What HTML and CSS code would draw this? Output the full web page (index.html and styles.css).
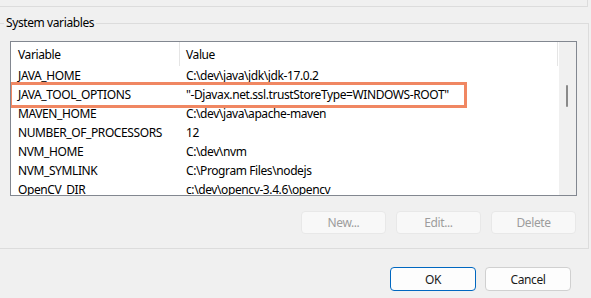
FILE: index.html
```html
<!DOCTYPE html>
<html lang="en">

<head>
  <meta charset="UTF-8" />
  <title>Environment Variables</title>
  <link rel="stylesheet" href="styles.css">
</head>

<body>

  <div class="prev-group"></div>

  <fieldset class="group">
    <legend>System variables</legend>

    <div class="listbox">
      <div class="list-main">
        <div class="row header">
          <span class="col-name">Variable</span>
          <span class="col-value">Value</span>
        </div>
        <div class="row"><span class="col-name">JAVA_HOME</span><span class="col-value">C:\dev\java\jdk\jdk-17.0.2</span></div>
        <div class="row"><span class="col-name">JAVA_TOOL_OPTIONS</span><span class="col-value">"-Djavax.net.ssl.trustStoreType=WINDOWS-ROOT"</span></div>
        <div class="row"><span class="col-name">MAVEN_HOME</span><span class="col-value">C:\dev\java\apache-maven</span></div>
        <div class="row"><span class="col-name">NUMBER_OF_PROCESSORS</span><span class="col-value">12</span></div>
        <div class="row"><span class="col-name">NVM_HOME</span><span class="col-value">C:\dev\nvm</span></div>
        <div class="row"><span class="col-name">NVM_SYMLINK</span><span class="col-value">C:\Program Files\nodejs</span></div>
        <div class="row"><span class="col-name">OpenCV_DIR</span><span class="col-value">c:\dev\opencv-3.4.6\opencv</span></div>
      </div>
      <div class="scrollbar"><div class="thumb"></div></div>
      <div class="highlight"></div>
    </div>

    <div class="buttons">
      <button class="btn" disabled>New...</button>
      <button class="btn" disabled>Edit...</button>
      <button class="btn" disabled>Delete</button>
    </div>
  </fieldset>

  <div class="dialog-buttons">
    <button class="btn primary">OK</button>
    <button class="btn">Cancel</button>
  </div>

</body>

</html>
```

FILE: styles.css
```css
body {
  font-family: 'Noto Sans', 'Open Sans', sans-serif;
  font-size: 12px;
  letter-spacing: -0.4px;
  background: #f0f0f0;
  color: #000;
  margin: 0;
  padding: 0;
  overflow: hidden;
}

.prev-group {
  height: 6px;
  margin: 0 3px 0 -10px;
  border-right: 1px solid #dcdcdc;
  border-bottom: 1px solid #dcdcdc;
}

.group {
  margin: 8px 2px 0 -10px;
  padding: 10px 11px 14px 19px;
  border: 1px solid #dcdcdc;
  min-width: 0;
}

.group legend {
  margin-left: -6px;
  padding: 0 2px;
  line-height: 16px;
}

.listbox {
  position: relative;
  display: flex;
  height: 153px;
  background: #fff;
  border: 1px solid #828790;
  overflow: hidden;
}

.list-main {
  flex: 1;
  min-width: 0;
}

.row {
  display: flex;
  height: 19px;
  align-items: center;
  white-space: nowrap;
}

.row.header {
  height: 24px;
}

.col-name {
  width: 169px;
  padding-left: 7px;
  box-sizing: border-box;
  flex-shrink: 0;
}

.col-value {
  padding-left: 6px;
}

.header .col-name {
  align-self: stretch;
  display: flex;
  align-items: center;
  border-right: 1px solid #e5e5e5;
}

.header .col-value {
  flex: 1;
  align-self: stretch;
  display: flex;
  align-items: center;
  margin-right: 1px;
  border-right: 1px solid #e5e5e5;
}

.scrollbar {
  width: 17px;
  flex-shrink: 0;
  background: #f0f0f0;
  position: relative;
}

.thumb {
  position: absolute;
  left: 7px;
  top: 43px;
  width: 2px;
  height: 22px;
  border-radius: 1px;
  background: #8a8a8a;
}

.highlight {
  position: absolute;
  left: -2px;
  top: 40px;
  width: 458px;
  height: 26px;
  box-sizing: border-box;
  border: 3px solid #f08762;
}

.buttons,
.dialog-buttons {
  display: flex;
  justify-content: flex-end;
}

.buttons {
  gap: 10px;
  margin-top: 15px;
  padding-right: 1px;
}

.dialog-buttons {
  gap: 9px;
  margin: 18px 20px 0 0;
}

.btn {
  font-family: inherit;
  font-size: 12px;
  letter-spacing: inherit;
  width: 85px;
  height: 23px;
  padding: 0;
  background: #fdfdfd;
  border: 1px solid #d0d0d0;
  border-radius: 4px;
  color: #1a1a1a;
}

.btn:disabled {
  background: #f8f8f8;
  border-color: #e8e8e8;
  color: #9d9d9d;
}

.dialog-buttons .btn {
  height: 24px;
  width: 86px;
}

.btn.primary {
  border-color: #0067c0;
}
```
